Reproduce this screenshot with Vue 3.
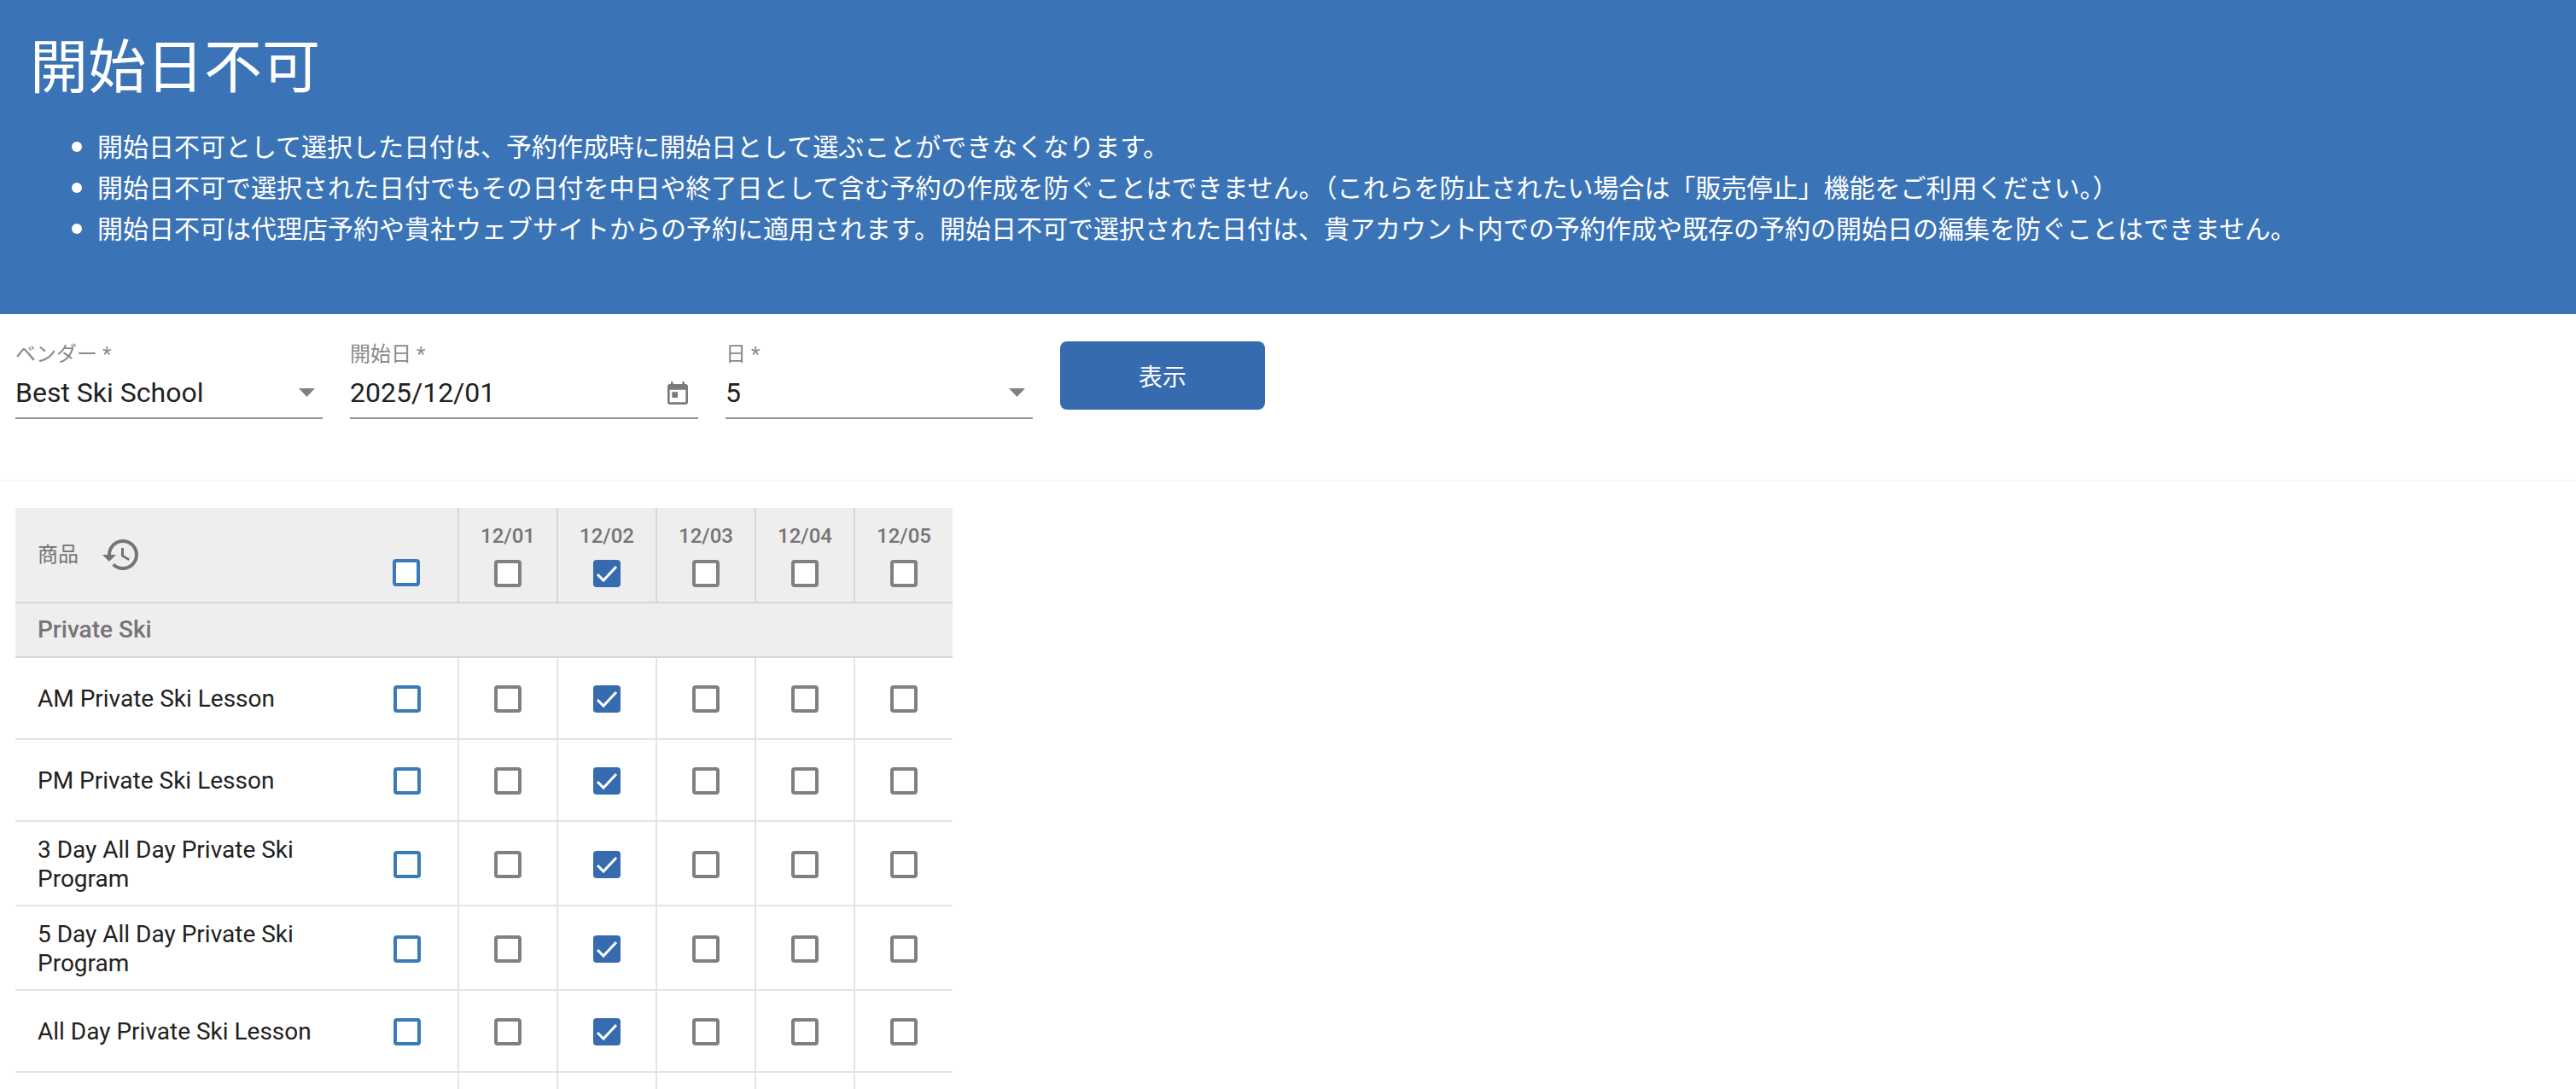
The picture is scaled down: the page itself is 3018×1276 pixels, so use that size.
<script setup>
const bullets = [
  '開始日不可として選択した日付は、予約作成時に開始日として選ぶことができなくなります。',
  '開始日不可で選択された日付でもその日付を中日や終了日として含む予約の作成を防ぐことはできません。（これらを防止されたい場合は「販売停止」機能をご利用ください。）',
  '開始日不可は代理店予約や貴社ウェブサイトからの予約に適用されます。開始日不可で選択された日付は、貴アカウント内での予約作成や既存の予約の開始日の編集を防ぐことはできません。'
]
const dates = ['12/01', '12/02', '12/03', '12/04', '12/05']
const rows = [
  { name: 'AM Private Ski Lesson', tall: false },
  { name: 'PM Private Ski Lesson', tall: false },
  { name: '3 Day All Day Private Ski Program', tall: true },
  { name: '5 Day All Day Private Ski Program', tall: true },
  { name: 'All Day Private Ski Lesson', tall: false },
  { name: '', tall: false }
]
</script>

<template>
  <div class="page">
    <header class="hero">
      <h1>開始日不可</h1>
      <ul>
        <li v-for="b in bullets" :key="b">{{ b }}</li>
      </ul>
    </header>

    <section class="filters">
      <div class="field vendor">
        <label>ベンダー *</label>
        <div class="control">
          <span>Best Ski School</span>
          <svg class="caret" viewBox="0 0 19 10"><path d="M0 0h19L9.500 10z" /></svg>
        </div>
      </div>
      <div class="field start">
        <label>開始日 *</label>
        <div class="control">
          <span>2025/12/01</span>
          <svg class="cal" viewBox="0 0 24 24"><path d="M19 3h-1V1h-2v2H8V1H6v2H5c-1.110 0-1.990.9-1.990 2L3 19c0 1.100.89 2 2 2h14c1.100 0 2-.9 2-2V5c0-1.100-.9-2-2-2zm0 16H5V8h14v11zM7 10h5v5H7z" /></svg>
        </div>
      </div>
      <div class="field days">
        <label>日 *</label>
        <div class="control">
          <span>5</span>
          <svg class="caret" viewBox="0 0 19 10"><path d="M0 0h19L9.500 10z" /></svg>
        </div>
      </div>
      <button class="show">表示</button>
    </section>

    <section class="grid">
      <div class="row head">
        <div class="name-cell">
          <span class="prod">商品</span>
          <svg class="history" viewBox="0 0 24 24"><path d="M13 3c-4.970 0-9 4.030-9 9H1l3.890 3.890.07.14L9 12H6c0-3.870 3.130-7 7-7s7 3.130 7 7-3.130 7-7 7c-1.930 0-3.680-.79-4.940-2.060l-1.420 1.420C8.270 19.990 10.510 21 13 21c4.970 0 9-4.030 9-9s-4.030-9-9-9zm-1 5v5l4.280 2.540.72-1.210-3.500-2.080V8H12z" /></svg>
        </div>
        <div class="all-cell"><i class="box blue"></i></div>
        <div v-for="(d, i) in dates" :key="d" class="day-cell">
          <span class="date">{{ d }}</span>
          <i class="box" :class="{ on: i === 1 }">
            <svg v-if="i === 1" viewBox="0 0 32 32"><path d="M5 17l7 7L27 8" /></svg>
          </i>
        </div>
      </div>
      <div class="group">Private Ski</div>
      <div v-for="(r, n) in rows" :key="n" class="row body" :class="{ tall: r.tall }">
        <div class="name-cell">{{ r.name }}</div>
        <div class="all-cell"><i class="box blue"></i></div>
        <div v-for="(d, i) in dates" :key="d" class="day-cell">
          <i class="box" :class="{ on: i === 1 }">
            <svg v-if="i === 1" viewBox="0 0 32 32"><path d="M5 17l7 7L27 8" /></svg>
          </i>
        </div>
      </div>
    </section>
  </div>
</template>

<style>
html, body { margin: 0; background: #fff; overflow: hidden; }
</style>

<style scoped>
.page {
  width: 3018px;
  height: 1276px;
  overflow: hidden;
  font-family: Roboto, "Noto Sans CJK JP", sans-serif;
  color: #212121;
}
.hero {
  box-sizing: border-box;
  height: 368px;
  background: #3b74b6;
  color: #fff;
  padding: 36px 36px 0 35px;
}
.hero h1 {
  margin: 0;
  font-size: 68px;
  line-height: 76px;
  font-weight: 400;
  font-family: "Noto Sans CJK JP", sans-serif;
}
.hero ul {
  margin: 34px 0 0;
  padding: 0 0 0 79px;
  font-size: 30px;
  line-height: 48px;
  font-family: "Noto Sans CJK JP", sans-serif;
}
.filters {
  box-sizing: border-box;
  height: 196px;
  display: flex;
  align-items: flex-start;
  gap: 32px;
  padding: 32px 18px 0;
  border-bottom: 2px solid #f5f5f5;
}
.field { display: flex; flex-direction: column; }
.vendor, .days { width: 360px; }
.start { width: 408px; }
.field label {
  font-size: 24px;
  line-height: 30px;
  color: #8a8a8a;
  font-family: Roboto, "Noto Sans CJK JP", sans-serif;
}
.control {
  box-sizing: border-box;
  height: 61px;
  display: flex;
  align-items: center;
  justify-content: space-between;
  font-size: 32px;
  border-bottom: 2px solid #949494;
}
.caret { width: 19px; height: 10px; margin-right: 9px; fill: #808080; }
.cal { width: 32px; height: 32px; margin: 4px 8px 0 0; fill: #7a7a7a; }
.show {
  width: 240px;
  height: 80px;
  border: 0;
  border-radius: 8px;
  background: #366bb0;
  color: #fff;
  font-size: 28px;
  font-family: "Noto Sans CJK JP", sans-serif;
}
.grid { width: 1098px; margin: 31px 0 0 18px; }
.row {
  display: grid;
  grid-template-columns: 400px 118px repeat(5, 116px);
  box-sizing: border-box;
}
.head {
  height: 112px;
  background: #eee;
  border-bottom: 2px solid #d6d6d6;
}
.body { height: 96px; padding-top: 2px; border-bottom: 2px solid #e4e4e4; }
.body.tall { height: 99px; }
.name-cell {
  display: flex;
  align-items: center;
  padding-left: 26px;
  font-size: 28px;
  line-height: 34px;
}
.prod { font-size: 24px; color: #757575; width: 74px; }
.history { width: 48px; height: 48px; fill: #757575; }
.all-cell { display: flex; align-items: center; justify-content: center; }
.head .all-cell { align-items: flex-end; padding: 0 2px 18px 0; }
.day-cell {
  display: flex;
  flex-direction: column;
  align-items: center;
  justify-content: center;
  border-left: 2px solid #e4e4e4;
}
.body .day-cell { margin-top: -2px; padding-top: 2px; }
.head .day-cell { justify-content: flex-end; padding-bottom: 17px; border-left-color: #d6d6d6; }
.date { font-size: 24px; line-height: 30px; color: #757575; font-weight: 500; margin-bottom: 13px; }
.box {
  box-sizing: border-box;
  display: block;
  width: 32px;
  height: 32px;
  background: #fff;
  border: 4px solid #808080;
  border-radius: 4px;
}
.box.blue { border-color: #3b7ab8; }
.box.on { background: #366bb0; border: 0; }
.box svg { display: block; width: 32px; height: 32px; fill: none; stroke: #fff; stroke-width: 3; }
.group {
  box-sizing: border-box;
  height: 64px;
  background: #eee;
  border-bottom: 2px solid #d6d6d6;
  padding-left: 26px;
  font-size: 28px;
  line-height: 62px;
  font-weight: 500;
  color: #757575;
}
</style>
